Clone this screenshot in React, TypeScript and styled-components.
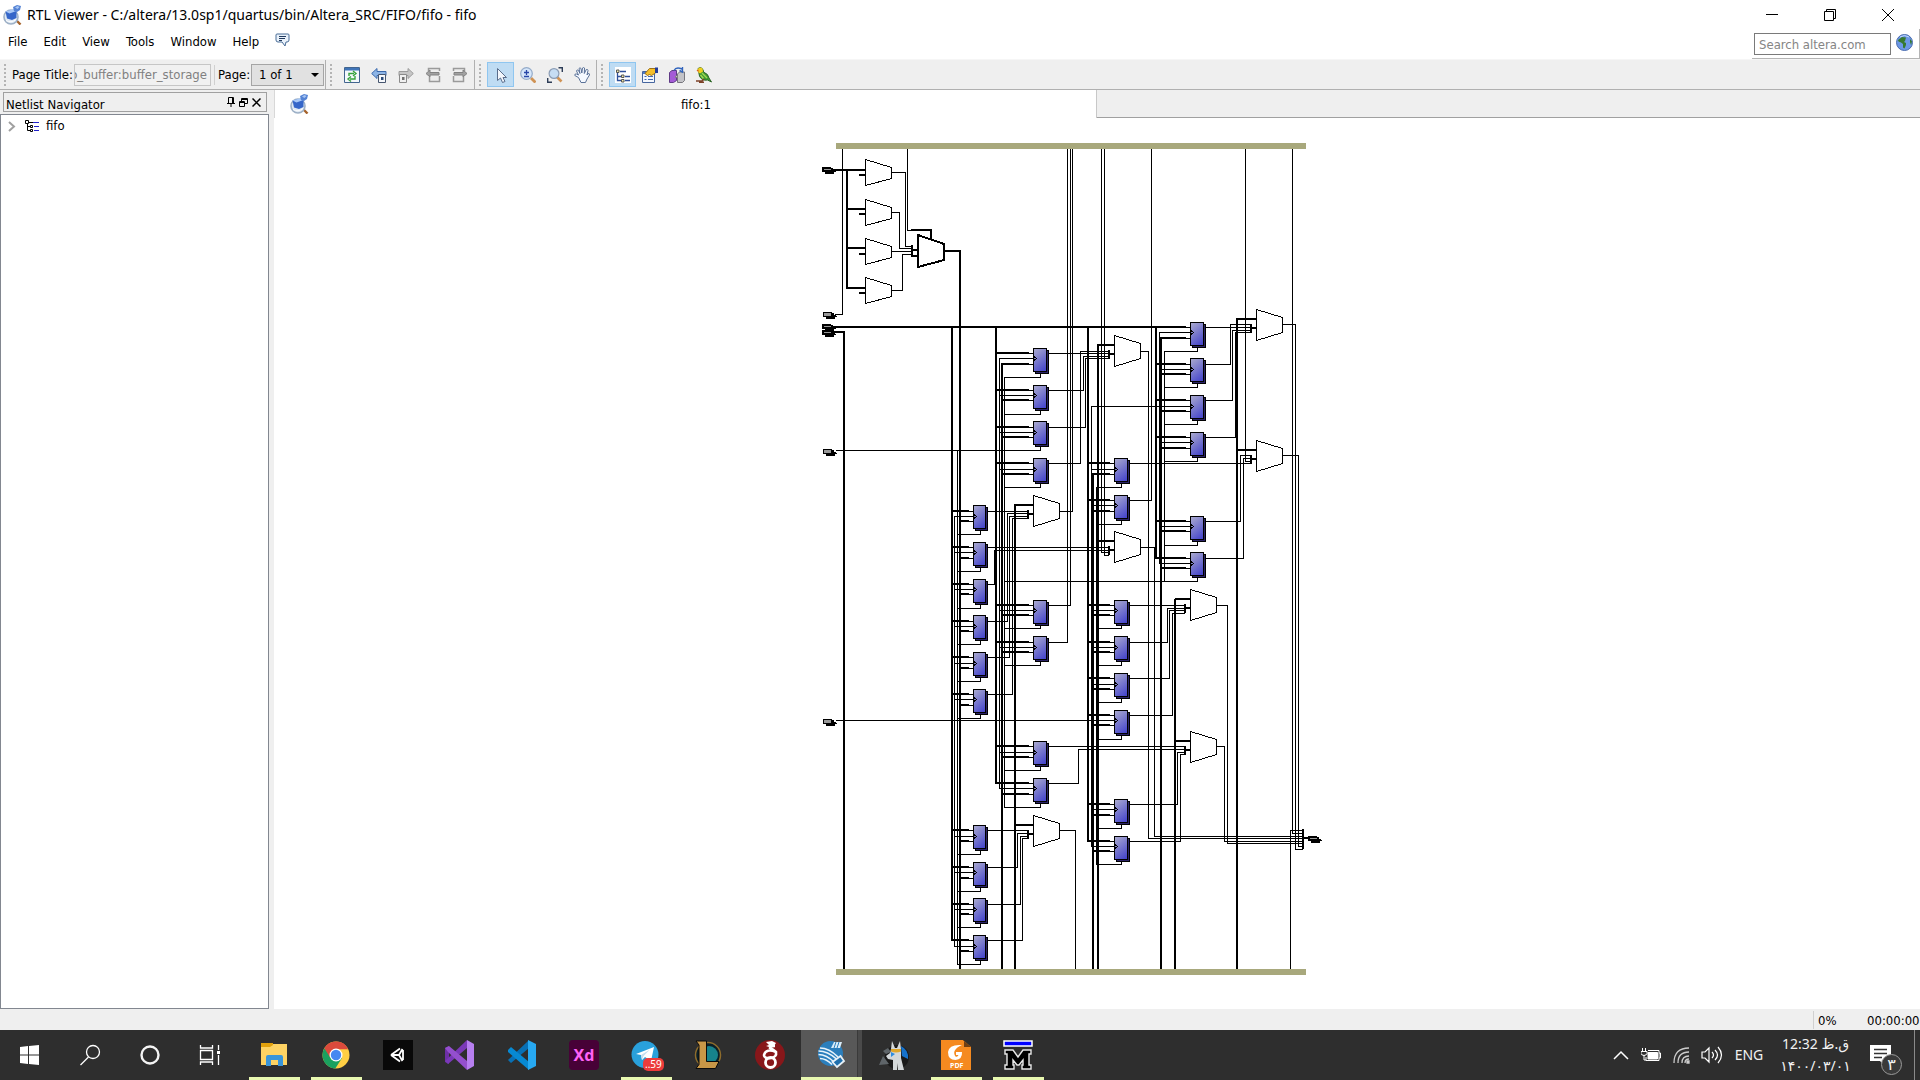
import React from "react";
import styled, { createGlobalStyle, css } from "styled-components";

const Global = createGlobalStyle`
  *, *::before, *::after { box-sizing: border-box; }
  body { margin: 0; background: #fff; }
  button, input, select { font: inherit; color: inherit; margin: 0; }
  button { border: 0; background: none; padding: 0; }
`;

const uiFont = `"DejaVu Sans Condensed", "DejaVu Sans", sans-serif`;
const shellFont = `"Noto Sans", "Open Sans", "DejaVu Sans", sans-serif`;

const Screen = styled.div`
  display: flex;
  flex-direction: column;
  height: 100vh;
  overflow: hidden;
  background: #fff;
  color: #000;
  font: 13px/16px ${uiFont};
`;

/* ---------- title bar and menu ---------- */

const TitleBar = styled.header`
  display: flex;
  align-items: center;
  height: 29px;
  padding: 0 3px 0 2px;
`;
const Title = styled.h1`
  flex: 1;
  margin: 0;
  padding-left: 5px;
  font: 400 14px/20px ${shellFont};
`;
const CaptionButton = styled.button`
  display: grid;
  place-items: center;
  width: 58px;
  height: 28px;
`;
const MenuBar = styled.div`
  display: flex;
  justify-content: space-between;
  height: 30px;
`;
const Menus = styled.nav`
  display: flex;
  align-items: center;
  gap: 16px;
  padding: 0 8px 4px;
`;
const SearchBox = styled.form`
  display: flex;
  align-items: center;
  gap: 5px;
  padding: 1px 6px 0 2px;
  border-right: 1px solid #b5b5b5;
  border-bottom: 1px solid #b5b5b5;
`;
const SearchInput = styled.input`
  width: 137px;
  height: 22px;
  padding: 0 4px;
  border: 1px solid #7a7a7a;
  background: #fff;
  &::placeholder { color: #858585; opacity: 1; }
`;

/* ---------- tool bar ---------- */

const ToolBar = styled.div`
  display: flex;
  height: 31px;
  background: #efefef;
  border-top: 1px solid #f6f6f6;
  border-bottom: 1px solid #b0b0b0;
`;
const ToolGroup = styled.div<{ $width?: number; $open?: boolean }>`
  display: flex;
  align-items: center;
  ${(p) => p.$width && css`width: ${p.$width}px;`}
  padding-left: 4px;
  border-right: ${(p) => (p.$open ? "0" : "1px solid #b0b0b0")};
`;
const Grip = styled.span`
  width: 2px;
  height: 22px;
  margin-right: 6px;
  background: repeating-linear-gradient(#b4b4b4 0 2px, transparent 2px 4px);
`;
const TitleField = styled.input`
  width: 137px;
  height: 22px;
  margin-right: 3px;
  padding: 0 3px 0 0;
  border: 1px solid #c6c6c6;
  background: #f1f1f1;
  color: #808080;
  direction: rtl;
`;
const FieldLabel = styled.label<{ $width: number }>`
  width: ${(p) => p.$width}px;
  white-space: nowrap;
`;
const Rule = styled.span`
  width: 1px;
  height: 20px;
  margin-right: 3px;
  background: #d0d0d0;
`;
const PageSelect = styled.span`
  position: relative;
  svg { position: absolute; right: 5px; top: 8px; pointer-events: none; }
  select {
    appearance: none;
    width: 73px;
    height: 22px;
    padding: 0 7px;
    border: 1px solid #a5a5a5;
    border-radius: 0;
    background: #e1e1e1;
  }
`;
const Tool = styled.button<{ $on?: boolean }>`
  display: grid;
  place-items: center;
  width: 27px;
  height: 25px;
  border: 1px solid ${(p) => (p.$on ? "#8fc6f0" : "transparent")};
  background: ${(p) => (p.$on ? "#bfdcf3" : "transparent")};
`;

/* ---------- work area ---------- */

const Work = styled.div`
  display: flex;
  flex: 1;
  min-height: 0;
  background: #efefef;
`;
const Dock = styled.aside`
  display: flex;
  flex-direction: column;
  width: 269px;
  margin-right: 5px;
`;
const DockHeader = styled.div`
  display: flex;
  align-items: center;
  height: 20px;
  margin: 2px 2px 2px 3px;
  padding: 0 3px 0 2px;
  border: 1px solid #a0a0a0;
`;
const DockTitle = styled.h2`
  flex: 1;
  margin: 0;
  padding-top: 6px;
  font: inherit;
`;
const DockButton = styled.button`
  display: grid;
  place-items: center;
  width: 13px;
  height: 16px;
`;
const Tree = styled.ul`
  flex: 1;
  margin: 0;
  padding: 2px 6px;
  list-style: none;
  border: 1px solid #828790;
  background: #fff;
`;
const TreeRow = styled.li`
  display: flex;
  align-items: center;
  height: 18px;
  gap: 7px;
`;
const View = styled.main`
  display: flex;
  flex: 1;
  flex-direction: column;
  background: #fff;
`;
const Tabs = styled.div`
  display: flex;
  height: 28px;
`;
const Tab = styled.button`
  display: grid;
  grid-template-columns: 20px 1fr 13px;
  align-items: center;
  width: 50%;
  padding: 0 0 0 14px;
  border-right: 1px solid #c8c8c8;
  border-left: 1px solid #d8d8d8;
  background: #fff;
`;
const TabName = styled.span`
  padding-top: 2px;
`;
const TabSpace = styled.div`
  flex: 1;
  background: #efefef;
  border-bottom: 1px solid #a0a0a0;
`;
const Canvas = styled.div`
  display: flex;
  flex: 1;
  justify-content: center;
  align-items: flex-start;
  padding: 25px 50px 0 0;
  overflow: hidden;
`;
const StatusBar = styled.footer`
  display: flex;
  align-items: center;
  justify-content: flex-end;
  height: 21px;
  background: #efefef;
`;
const Status = styled.span<{ $width: number; $ruled?: boolean }>`
  width: ${(p) => p.$width}px;
  padding: 2px 0 0 4px;
  border-left: 1px solid ${(p) => (p.$ruled ? "#d0d0d0" : "transparent")};
`;

/* ---------- schematic ---------- */

type Reg = [top: number, out: number, clock: number, reset: number, foot: number];
interface Column { x: number; w: number; d: number; clk: number; rst: number; foot: number; regs: Reg[] }

const columns: Column[] = [
  { x: 973, w: 13, d: 952, clk: 954, rst: 960, foot: 957, regs: [
    [505, 511, 516, 521, 534], [542, 547, 552, 558, 571], [579, 584, 589, 594, 608],
    [615, 621, 626, 631, 644], [652, 657, 663, 668, 681], [689, 694, 699, 705, 718],
    [825, 830, 836, 841, 854], [862, 867, 872, 878, 891], [898, 904, 909, 914, 927],
    [935, 940, 946, 951, 964] ] },
  { x: 1033, w: 14, d: 996, clk: 999, rst: 1002, foot: 1004, regs: [
    [348, 353, 358, 364, 377], [385, 390, 395, 400, 414], [421, 427, 432, 437, 450],
    [458, 463, 469, 474, 487], [600, 605, 610, 615, 628], [636, 642, 647, 652, 665],
    [741, 746, 752, 757, 770], [778, 783, 788, 794, 807] ] },
  { x: 1114, w: 14, d: 1088, clk: 1091, rst: 1093, foot: 1096, regs: [
    [458, 463, 469, 474, 487], [495, 500, 505, 511, 524], [600, 605, 610, 615, 628],
    [636, 642, 647, 652, 665], [673, 678, 684, 689, 702], [710, 715, 720, 725, 739],
    [799, 804, 809, 815, 828], [836, 841, 846, 851, 864] ] },
  { x: 1190, w: 14, d: 1156, clk: 1159, rst: 1161, foot: 1164, regs: [
    [322, 327, 332, 338, 351], [358, 364, 369, 374, 387], [395, 400, 406, 411, 424],
    [432, 437, 442, 448, 461], [516, 521, 526, 531, 545], [552, 558, 563, 568, 581] ] },
];

/* four input multiplexers: left edge, top, x of the select line */
const muxes: [number, number, number][] = [
  [1114, 335, 1098], [1033, 495, 1015], [1114, 531, 1098], [1256, 309, 1237],
  [1256, 440, 1237], [1190, 589, 1175], [1190, 731, 1175], [1033, 815, 1015],
];

const thinWires = [
  "M835 314H842V149", "M907 149V230H911",
  "M892 172H905V246H911", "M892 212H899V248H911", "M892 251H911", "M892 290H902V254H911",
  "M836 450H1040", "M836 720H1114", "M957 450V964", "M954 516V946",
  "M999 358V788", "M1004 377V807", "M1091 846V406H1190", "M1096 487V864",
  "M1159 332V563", "M1164 351V581", "M1004 581H1197",
  "M1049 353H1108", "M1049 390H1083V356H1108", "M1049 427H1085V358H1108", "M1049 463H1080V351H1108",
  "M1140 351H1148V838H1302",
  "M988 511H1027", "M988 547H1108", "M988 584H994V550H1108",
  "M988 621H1007V513H1027", "M988 657H1009V516H1027", "M988 694H1012V518H1027",
  "M1059 511H1072V149", "M1049 642H1067V149", "M1049 605H1070V149",
  "M1101 149V552H1108", "M1104 149V555H1108", "M1140 547H1154V836H1302",
  "M1130 500H1151V149",
  "M1206 327H1250", "M1206 364H1230V324H1250", "M1206 400H1232V330H1250", "M1206 437H1235V332H1250",
  "M1282 324H1295V849H1302", "M1245 149V461H1250", "M1292 146V833H1302",
  "M1206 521H1240V455H1250", "M1206 558H1243V458H1250", "M1130 463H1250", "M1282 455H1298V846H1302",
  "M1130 605H1184", "M1130 642H1167V608H1184", "M1130 678H1169V610H1184", "M1130 715H1172V613H1184",
  "M1216 605H1227V843H1302",
  "M1049 746H1184", "M1049 783H1078V749H1184", "M1130 804H1177V752H1184", "M1130 841H1180V754H1184",
  "M1216 746H1224V841H1302",
  "M988 830H1027", "M988 867H1017V833H1027", "M988 904H1020V836H1027", "M988 940H1022V838H1027",
  "M1059 830H1075V969", "M1302 830H1290V969",
].join("");

const thickWires = [
  "M834 170H864", "M847 170V288", "M847 209H864", "M847 248H864", "M847 288H864",
  "M860 175H864", "M860 214H864", "M860 254H864", "M860 293H864",
  "M912 230H931V238", "M912 246V256", "M912 250H917", "M912 256H917",
  "M918 235V267L944 260V244L918 235", "M944 251H960V969",
  "M834 327H1185", "M834 332H844V969",
  "M952 327V940", "M996 327V783", "M1088 327V841", "M1156 327V558",
  "M1002 364V969", "M1093 474V969", "M1161 338V969",
  "M1098 345V969", "M1015 505V969", "M1237 319V969", "M1175 600V969",
  "M1303 830V848", "M1303 838H1309",
].join("");

const Pin = ({ x, y, bold }: { x: number; y: number; bold?: boolean }) => (
  <g>
    <path d={`M${x + 3} ${y + 3}h10v1h1v1h-2v2h-9z`} fill="#000" />
    <path d={`M${x} ${y}h9v1h2v3h-2v1h-9z`} fill="#000" />
    <path d={`M${x + (bold ? 2 : 1)} ${y + (bold ? 2 : 1)}h7v${bold ? 1 : 3}h-7z`} fill="#999" />
  </g>
);

const Schematic = () => (
  <svg width="512" height="832" viewBox="816 143 512 832" shapeRendering="crispEdges" role="img" aria-label="Netlist schematic of fifo">
    <defs>
      <linearGradient id="cell" x1="0" y1="0" x2="0.5" y2="1.100">
        <stop offset="0" stopColor="#acacce" />
        <stop offset="1" stopColor="#4848cc" />
      </linearGradient>
    </defs>
    <g fill="none" stroke="#000" strokeLinecap="square">
      <path d={thinWires} transform="translate(.5 .5)" />
      <path d={thickWires} strokeWidth="2" />
    </g>
    {[159, 199, 238, 277].map((y) => (
      <path key={y} d={`M865.5 ${y + 0.5}v26l26-7v-11z`} fill="#fff" stroke="#000" />
    ))}
    {muxes.map(([x, y, sel]) => (
      <g key={`${x}-${y}`} fill="none" stroke="#000">
        <path d={`M${sel} ${y + 10}H${x}M${x - 5} ${y + 15}v9M${x - 5} ${y + 19}h5`} strokeWidth="2" />
        <path d={`M${x + 0.5} ${y + 0.5}v31l26-8v-15z`} fill="#fff" />
      </g>
    ))}
    {columns.map((c) =>
      c.regs.map(([top, out, clk, rst, foot]) => (
        <g key={`${c.x}-${top}`} fill="none" stroke="#000">
          <path d={`M${c.d} ${out}H${c.x - 4}M${c.rst} ${rst}H${c.x - 4}`} strokeWidth="2" />
          <path d={`M${c.x - 6} ${out + 0.5}h6M${c.clk} ${clk + 0.5}H${c.x}M${c.x - 6} ${rst + 0.5}h6M${c.foot} ${foot + 0.5}H${c.x + 7.5}V${top + 25}M${c.x + c.w} ${out + 0.5}h3`} />
          <rect x={c.x + 2.5} y={top + 2.5} width={c.w - 1} height="23" fill="#2a2266" />
          <rect x={c.x + 0.5} y={top + 0.5} width={c.w - 1} height="23" fill="url(#cell)" />
          <path d={`M${c.x + 1} ${clk - 1.5}l2.5 2l-2.5 2`} />
        </g>
      ))
    )}
    <Pin x={822} y={167} bold />
    <Pin x={823} y={312} />
    <Pin x={822} y={330} bold />
    <Pin x={822} y={324} bold />
    <Pin x={823} y={449} />
    <Pin x={823} y={719} />
    <Pin x={1308} y={836} bold />
    <path d="M836 143h470v6h-470zM836 969h470v6h-470z" fill="#a8a87c" />
  </svg>
);

/* ---------- application icons ---------- */

const ViewerIcon = () => (
  <svg width="20" height="20" viewBox="0 0 20 20" aria-hidden="true">
    <path d="M14.500 15.500l4 4" stroke="#a5622b" strokeWidth="2.400" />
    <circle cx="9" cy="12" r="7" fill="#dfe9f4" stroke="#9db0c6" strokeWidth="1.600" />
    <path d="M3.500 6.500l9-2 2 2v6.500l-4.500 2-5-1.500z" fill="#3566c9" />
    <path d="M3.500 6.500l8.500-2.500 2.500 2-7 2.500z" fill="#a8c8f7" />
    <path d="M11 2l4-2 4 1-1 4-3 2-3-1z" fill="#5583d4" />
    <path d="M13 2.500l2.500-1.500 2 1-2 2z" fill="#a7c5f3" />
    <path d="M4 15.500q5 3 10-1" fill="none" stroke="#fff" />
  </svg>
);
const ToolSvg = ({ children }: { children: React.ReactNode }) => (
  <svg width="16" height="16" viewBox="0 0 16 16" aria-hidden="true" fill="none">{children}</svg>
);
const Refresh = () => <ToolSvg><path d="M.5.5h15v15H.5z" fill="#f4f8fc" stroke="#42658f" /><path d="M1 1h14v2.500H1z" fill="#3f74b8" /><path d="M5 9V6.500h5M9 4l3 2.500L9 9M11 9v3H6M7 9.500L4 12l3 2.500" stroke="#36a23c" strokeWidth="1.400" /></ToolSvg>;
const Back = () => <ToolSvg><path d="M.7 6.500L6 1.500v3h9v4H6v3z" fill="#8db5e6" stroke="#3a68ac" /><path d="M7.500 7.500h7v8h-7z" fill="#f6f8fb" stroke="#46566f" /><path d="M10 10h2.500v3H10z" fill="#2c4d7c" /></ToolSvg>;
const Forward = () => <ToolSvg><path d="M15.300 6.500L10 1.500v3H1v4h9v3z" fill="#c6c6c6" stroke="#9b9b9b" /><path d="M1.500 7.500h7v8h-7z" fill="#f0f0f0" stroke="#8a8a8a" /><path d="M4 10h2.500v3H4z" fill="#707070" /></ToolSvg>;
const SheetArrow = ({ right }: { right?: boolean }) => (
  <ToolSvg><g transform={right ? "translate(16 0) scale(-1 1)" : undefined}><path d="M3.500 4V1.500h11V4M4.500 10v4.500h10V9" fill="#ededed" stroke="#9a9a9a" strokeWidth="1.500" /><path d="M1 6.500l4-3.500v2.500h9v2.500H5V10z" fill="#a2a2a2" stroke="#828282" /></g></ToolSvg>
);
const Pointer = () => <ToolSvg><path d="M4.500 1.500v12l3-2.500 2 4.500 2.500-1-2-4h3.500z" fill="#f4f7fc" stroke="#5a6d8b" /></ToolSvg>;
const ZoomTool = () => <ToolSvg><path d="M11 11l4.500 4.500" stroke="#d09355" strokeWidth="2.800" /><circle cx="6.500" cy="6.500" r="5.800" fill="#d5e6fa" stroke="#94abc9" strokeWidth="1.200" /><path d="M4 5.500h5M6.500 3v5M4 9.500h5" stroke="#2746a8" strokeWidth="1.300" /></ToolSvg>;
const FitTool = () => <ToolSvg><path d="M11.500.700h3.800V5M.7 11v4.300H5" stroke="#2d3d57" strokeWidth="1.400" /><path d="M10 10l4.500 4.500" stroke="#d09355" strokeWidth="2.600" /><circle cx="7" cy="6.500" r="4.900" fill="#c6ddf4" stroke="#8b9cb4" strokeWidth="1.200" /></ToolSvg>;
const Hand = () => <ToolSvg><path d="M4.500 10.500L.8 8.500q-.3-2 1.700-1.500l2 1L2.500 4Q3 2 4.500 3.500l1.500 3-1-5q1-1.500 2 0l.8 4.500.7-5q1-1 2 0l-.2 5.500 2-4q1.500-.5 1.700 1L13 8l1.200-1.500q1.500-.3 1.300 1.500L13 12l-1.500 3.500H7z" fill="#f5f9ff" stroke="#5b7298" /></ToolSvg>;
const Hierarchy = () => <ToolSvg><path d="M0 0h16v16H0z" fill="#fff" /><path d="M2.500 6v7.500H6M3 9.500h3M5 4.500h6M10 9.500h5M10 13.500h5" stroke="#2e4f9a" strokeWidth="1.300" /><path d="M1.500 3h2.500v2.500H1.500zM6.500 8h2.500v2.500H6.500zM6.500 12.500h2.500V15H6.500z" fill="#eee8aa" stroke="#555" /></ToolSvg>;
const Properties = () => <ToolSvg><path d="M.5 4.500h12v11H.5z" fill="#f3f7fd" stroke="#46669f" /><path d="M1 5h4v2H1z" fill="#4d7ac7" /><path d="M2.500 9.500h2M6 9.500h5M2.500 12.500h2M6 12.500h5" stroke="#4469ae" /><path d="M3 6.500L7.500 1.500h6v4.500l-4 2.500-2-1-2 1z" fill="#f5bf2a" stroke="#9c7119" /><path d="M13 .5h3V6h-3z" fill="#233d9a" /></ToolSvg>;
const Cubes = () => <ToolSvg><path d="M.5 5.500L3 3.500h4.500v10l-3 2h-4z" fill="#a45bd6" stroke="#5f3a86" /><path d="M8.500 7l2-2h5v8.500l-2 2h-5z" fill="#c3c3c7" stroke="#77777d" /><path d="M6.500 9.500q1.500-1.500 2 0t-2 1z" fill="#ddd" stroke="#777" /><path d="M5 3.500Q7-.5 13 2M13.500 0v5L10.500 3.500" stroke="#3265bd" strokeWidth="1.400" /></ToolSvg>;
const Parrot = () => <ToolSvg><path d="M2 1.500q3-2.500 5 1l.5 2.500q5 2 5.500 6l2.500 4-4-2q-6 1-8-4z" fill="#3f9a35" stroke="#2c6626" /><path d="M1.500 2.500q2-3.500 5-1l.5 3-3 2q-3-1-2.500-4z" fill="#f0cf20" /><path d="M.5 3.500l2-1v2.500z" fill="#d4561f" /><path d="M6 6l5 5M4.500 8l3 3.500" stroke="#a2d851" strokeWidth="1.400" /><path d="M0 14h6l2-2M3 15.300h5" stroke="#7c4228" strokeWidth="1.600" /></ToolSvg>;

const NoteIcon = () => <svg width="15" height="14" viewBox="0 0 15 14" aria-hidden="true"><path d="M2 1h11q1 0 1 1v5q0 2-2 2h-1l-1 4-3-4H3Q1 9 1 7V2q0-1 1-1z" fill="#eaf2fb" stroke="#496c96" /><path d="M4 3.500h7M4 5.500h6M4 7.500h3" stroke="#223b5e" /></svg>;
const Globe = () => <svg width="17" height="17" viewBox="0 0 17 17" aria-hidden="true"><circle cx="8.500" cy="8.500" r="8" fill="#6c98e6" stroke="#4a6cae" /><path d="M2 6l4-3 4 .500-1 3.500-1 1 2 1v2l-1.500 3.500-1.500-1V10l-2-1.500-2.500-1zM14 5l2 2.500-1 3.500-1-3z" fill="#37792f" /><path d="M4 3q4.500-3 9 0" stroke="#c3d8fa" fill="none" /></svg>;

/* ---------- Windows task bar ---------- */

const TaskBar = styled.footer`
  display: flex;
  height: 50px;
  background: #2e2e2e;
  color: #f2f2f2;
  font: 14px/20px ${shellFont};
`;
const Shortcuts = styled.nav`
  display: flex;
  flex: 1;
`;
const Start = styled.button`
  display: grid;
  place-items: center;
  width: 60px;
  height: 50px;
`;
const AppGroup = styled.div`
  display: flex;
  padding-left: 3px;
`;
const AppButton = styled.button<{ $running?: boolean; $active?: boolean }>`
  position: relative;
  display: grid;
  place-items: center;
  width: 62px;
  height: 50px;
  background: ${(p) => (p.$active ? "linear-gradient(90deg, #585858 56px, #3a3a3a 56px 57px, #4a4a4a 57px 61px, transparent 61px)" : "transparent")};
  &::after {
    content: "";
    position: absolute;
    right: ${(p) => (p.$active ? 1 : 5)}px;
    bottom: 0;
    left: ${(p) => (p.$active ? 0 : 6)}px;
    height: 3px;
    background: ${(p) => (p.$running || p.$active ? "#e8f8b0" : "transparent")};
  }
`;
const XdTile = styled.span`
  display: grid;
  place-items: center;
  width: 30px;
  height: 30px;
  border-radius: 4px;
  background: #470137;
  color: #ff61f6;
  font: 700 16px/20px ${shellFont};
`;
const Unread = styled.span`
  position: absolute;
  top: 28px;
  left: 28px;
  padding: 0 2px;
  border-radius: 5px;
  background: #ec3b3b;
  color: #fff;
  font: 10px/13px ${shellFont};
`;
const Tray = styled.div`
  display: flex;
  align-items: center;
`;
const TrayButton = styled.button<{ $width: number }>`
  display: grid;
  place-items: center;
  width: ${(p) => p.$width}px;
  height: 50px;
`;
const Clock = styled.button`
  width: 89px;
  height: 50px;
  font: 14px/22px ${shellFont};
  text-align: center;
  span { display: block; }
`;
const Notice = styled(TrayButton)`
  position: relative;
  padding-right: 14px;
`;
const NoticeCount = styled.span`
  position: absolute;
  top: 24px;
  left: 21px;
  width: 21px;
  height: 21px;
  border: 1px solid #9a9a9a;
  border-radius: 50%;
  background: #3a3a3a;
  font: 16px/18px ${shellFont};
`;
const ShowDesktop = styled.button`
  width: 6px;
  height: 50px;
  border-left: 1px solid #8a8a8a;
`;

const Icon30 = ({ children }: { children: React.ReactNode }) => (
  <svg width="30" height="30" viewBox="0 0 30 30" fill="none" aria-hidden="true">{children}</svg>
);

const starts: [string, React.ReactNode][] = [
  ["Start", <Icon30><path d="M5 7l8-1v8.500H5zM14 6l10-1v9.500H14zM5 15.500h8V24l-8-1zM14 15.500h10V25l-10-1z" fill="#fff" /></Icon30>],
  ["Search", <Icon30><circle cx="18" cy="12" r="6.500" stroke="#fff" strokeWidth="1.300" /><path d="M13.500 17L5.500 25" stroke="#fff" strokeWidth="1.300" /></Icon30>],
  ["Cortana", <Icon30><circle cx="15" cy="15" r="8.500" stroke="#f4f4f4" strokeWidth="2.400" /></Icon30>],
  ["Task View", <Icon30><path d="M5.500 5v3h12V5M5.500 10.500h12v9h-12zM5.500 25v-3h12v3M23.500 5v5M23.500 15v10" stroke="#fff" strokeWidth="1.300" /><path d="M22 11h3v3h-3z" fill="#fff" /></Icon30>],
];

const apps: { name: string; icon: React.ReactNode; running?: boolean; active?: boolean }[] = [
  { name: "File Explorer", running: true, icon: <Icon30><path d="M2 3h12v3H2z" fill="#dd9b08" /><path d="M2 6l12-2h14v21H2z" fill="#fed363" /><path d="M2 3h12v2l-3 2H2z" fill="#e2a10c" /><path d="M7 26v-9q0-2 2-2h13q2 0 2 2v9h-5v-6h-7v6z" fill="#3995d9" /></Icon30> },
  { name: "Google Chrome", running: true, icon: <Icon30><circle cx="15" cy="15" r="13.500" fill="#ffcf44" /><path d="M3.300 8.200a13.500 13.500 0 0 0 11 20.300L21 18l-6-3z" fill="#1aa15f" /><path d="M3.300 8.200a13.500 13.500 0 0 1 23.900 1H15l-6 8z" fill="#db4a3c" /><circle cx="15" cy="15" r="6.500" fill="#fff" /><circle cx="15" cy="15" r="5.200" fill="#4688f1" /></Icon30> },
  { name: "Unity", icon: <Icon30><path d="M0 0h30v30H0z" fill="#090909" /><path d="M8 15l9-6.500M20 10v10M17 21.500L8 15M8 15h8M16 15l3.500-6M16 15l3.500 6" stroke="#fff" strokeWidth="1.800" /></Icon30> },
  { name: "Visual Studio", icon: <Icon30><path d="M0 8l4-2v18l-4-2z" fill="#6d2fa5" /><path d="M3 24l19-16V0L0 21z" fill="#7a38b8" /><path d="M0 8l4-2 18 15v9L3 12z" fill="#944fce" /><path d="M22 0l7 4v22l-7 4z" fill="#b77ff0" /></Icon30> },
  { name: "Visual Studio Code", icon: <Icon30><path d="M1 20L20 2l2-2v8L4 23z" fill="#0870b5" /><path d="M1 10l3-3 18 15v8L1 12z" fill="#0789d3" /><path d="M21 0l8 4v22l-8 4z" fill="#27a9f2" /></Icon30> },
  { name: "Adobe XD", icon: <XdTile>Xd</XdTile> },
  { name: "Telegram", running: true, icon: <><Icon30><circle cx="14" cy="14.500" r="13.500" fill="#29a1dc" /><path d="M5 14L23 7l-3 14-6-4-3 3-1-5z" fill="#fff" /><path d="M10 15l9-5.500L12.500 16l-1.500 4z" fill="#c4dfef" /></Icon30><Unread>..59</Unread></> },
  { name: "League of Legends", icon: <Icon30><circle cx="15" cy="15" r="12.500" fill="#0b2029" stroke="#8e6c2c" strokeWidth="1.500" /><circle cx="16" cy="15" r="9" fill="#17838c" /><path d="M3 1h10.500v20.500H26l-3.500 7H3l3-4V5z" fill="#c89747" stroke="#0b0b0b" /></Icon30> },
  { name: "WireGuard", icon: <Icon30><circle cx="15" cy="15" r="15" fill="#88171a" /><circle cx="15.500" cy="22.500" r="5" stroke="#fff" strokeWidth="2.800" /><path d="M21 12q-10-4-12 3 0 4 7 3 6-1 5-6-3-3-6-4 0-2 5-2" stroke="#fff" strokeWidth="2.600" /><path d="M11 2l6-1 4 2-2 3-5 1-3-1 3-1z" fill="#fff" /></Icon30> },
  { name: "Quartus II", active: true, icon: <Icon30><circle cx="13.500" cy="13.500" r="12.500" fill="#2b7fbd" /><path d="M14 8l3-6h8l-2 6z" fill="#d9edf9" /><path d="M19 2l-2 6M22 2l-2 6" stroke="#2b7fbd" /><path d="M1.500 11q9 0 18 8M1.500 14.500q8 0 16 8M3 18.500q6 0 12 6M3 8q9 0 18 9" stroke="#e9f4fb" strokeWidth="1.600" /><path d="M15.500 22l8-6 3.500 5-7 6z" fill="#1f6fac" stroke="#e8f1f7" strokeWidth="1.800" /></Icon30> },
  { name: "ModelSim PE", icon: <Icon30><circle cx="18" cy="17" r="12" fill="#1a1a1a" /><path d="M22 6q8 4 7 13l-6-3z" fill="#1672cb" /><path d="M11 13l1-4 1-8 3 7h2l3-7 1 8v9l3 12h-6v-7l-1 7h-4v-10l-5-1-2-3z" fill="#d4d8da" /><path d="M12 9h10v2.500q-5 2-10 0z" fill="#e0a62a" /><path d="M12 12l4 2-4 3z" fill="#2c8ce0" /><path d="M4 11l5-3 3 4-5 2zM0 25l4-9 6 8z" fill="#5f6569" /></Icon30> },
  { name: "Foxit PDF", running: true, icon: <Icon30><path d="M0 0h22l8 7v23H0z" fill="#f58a20" /><path d="M22 0h1v7h7z" fill="#713f13" /><path d="M21 5q-13-1-14 7 0 8 7.500 8 7-.500 6.500-8h-6v3h2.500q-1 2.500-3 1.500Q10 10 21 5z" fill="#fff" /><text x="9" y="28" fill="#fff" fontFamily="Open Sans, sans-serif" fontSize="7" fontWeight="700">PDF</text></Icon30> },
  { name: "ModelSim", running: true, icon: <Icon30><path d="M1 1h28v5H1z" fill="#00f" stroke="#fff" strokeWidth="1.500" /><path d="M2 10h8l5 7 5-7h8v4h-2v11h2v4h-9v-4h1v-5l-4 5h-2l-4-5v5h1v4H2v-4h2V14H2z" fill="#000" stroke="#e8e8e8" strokeWidth="1.400" /></Icon30> },
];

const App = () => (
  <Screen>
    <Global />
    <TitleBar>
      <ViewerIcon />
      <Title>RTL Viewer - C:/altera/13.0sp1/quartus/bin/Altera_SRC/FIFO/fifo - fifo</Title>
      <CaptionButton aria-label="Minimize"><svg width="12" height="12"><path d="M0 5.500h12" stroke="#000" /></svg></CaptionButton>
      <CaptionButton aria-label="Restore"><svg width="12" height="12" fill="none" stroke="#000"><path d="M.5 2.500h9v9h-9zM2.500 2.500v-2h9v9h-2" /></svg></CaptionButton>
      <CaptionButton aria-label="Close"><svg width="12" height="12"><path d="M0 0l12 12M12 0L0 12" stroke="#000" /></svg></CaptionButton>
    </TitleBar>
    <MenuBar>
      <Menus aria-label="Main menu">
        {["File", "Edit", "View", "Tools", "Window", "Help"].map((m) => <button key={m}>{m}</button>)}
        <button aria-label="Feedback"><NoteIcon /></button>
      </Menus>
      <SearchBox onSubmit={(e) => e.preventDefault()}>
        <SearchInput aria-label="Search altera.com" placeholder="Search altera.com" />
        <button aria-label="Search the web"><Globe /></button>
      </SearchBox>
    </MenuBar>
    <ToolBar role="toolbar">
      <ToolGroup $width={326}>
        <Grip />
        <FieldLabel $width={62} htmlFor="page-title">Page Title:</FieldLabel>
        <TitleField id="page-title" readOnly value="o_buffer:buffer_storage" />
        <Rule />
        <FieldLabel $width={33} htmlFor="page-no">Page:</FieldLabel>
        <PageSelect>
          <select id="page-no"><option>1 of 1</option></select>
          <svg width="8" height="6"><path d="M0 1h8L4 5z" fill="#000" /></svg>
        </PageSelect>
      </ToolGroup>
      <ToolGroup $width={149}>
        <Grip />
        <Tool aria-label="Refresh"><Refresh /></Tool>
        <Tool aria-label="Back"><Back /></Tool>
        <Tool aria-label="Forward"><Forward /></Tool>
        <Tool aria-label="Previous page"><SheetArrow /></Tool>
        <Tool aria-label="Next page"><SheetArrow right /></Tool>
      </ToolGroup>
      <ToolGroup $width={122}>
        <Grip />
        <Tool $on aria-label="Selection tool"><Pointer /></Tool>
        <Tool aria-label="Zoom tool"><ZoomTool /></Tool>
        <Tool aria-label="Fit in window"><FitTool /></Tool>
        <Tool aria-label="Hand tool"><Hand /></Tool>
      </ToolGroup>
      <ToolGroup $open>
        <Grip />
        <Tool $on aria-label="Netlist Navigator"><Hierarchy /></Tool>
        <Tool aria-label="Properties"><Properties /></Tool>
        <Tool aria-label="Partitions"><Cubes /></Tool>
        <Tool aria-label="Bird's eye view"><Parrot /></Tool>
      </ToolGroup>
    </ToolBar>
    <Work>
      <Dock>
        <DockHeader>
          <DockTitle>Netlist Navigator</DockTitle>
          <DockButton aria-label="Pin"><svg width="8" height="10" fill="none" stroke="#000"><path d="M1.500 6V.500h5V6M0 6.500h8M4 6.500V10M5.500 1v5" /></svg></DockButton>
          <DockButton aria-label="Float"><svg width="9" height="9" fill="none" stroke="#000"><path d="M2.500 3V.500h6v5H6M3 1.500h5M.5 3.500h5v5h-5zM1 4.500h4" /></svg></DockButton>
          <DockButton aria-label="Close panel"><svg width="9" height="9" stroke="#000" strokeWidth="1.500"><path d="M.5.5l8 8M8.500.5l-8 8" /></svg></DockButton>
        </DockHeader>
        <Tree>
          <TreeRow>
            <svg width="11" height="11" fill="none" stroke="#a0a0a0" strokeWidth="2" aria-hidden="true"><path d="M2 1l5 4.500L2 10" /></svg>
            <svg width="14" height="12" fill="none" stroke="#000" aria-hidden="true"><path d="M.5.5h3v3h-3zM2.500 4v6.500H5M3 6.500h2M4 2.500h4M5.500 5.500h2v2h-2zM5.500 9.500h2v2h-2z" /><path d="M8 2.500h6M9 6.500h5M9 10.500h5" stroke="#22c" /></svg>
            fifo
          </TreeRow>
        </Tree>
      </Dock>
      <View>
        <Tabs>
          <Tab><ViewerIcon /><TabName>fifo:1</TabName></Tab>
          <TabSpace />
        </Tabs>
        <Canvas><Schematic /></Canvas>
      </View>
    </Work>
    <StatusBar>
      <Status $width={49} $ruled>0%</Status>
      <Status $width={58}>00:00:00</Status>
    </StatusBar>
    <TaskBar>
      <Shortcuts aria-label="Taskbar">
        {starts.map(([name, icon]) => <Start key={name} aria-label={name}>{icon}</Start>)}
        <AppGroup>
          {apps.map((a) => <AppButton key={a.name} aria-label={a.name} $running={a.running} $active={a.active}>{a.icon}</AppButton>)}
        </AppGroup>
      </Shortcuts>
      <Tray>
        <TrayButton $width={30} aria-label="Show hidden icons"><svg width="16" height="10" fill="none" stroke="#fff" strokeWidth="1.500"><path d="M1 9l7-7 7 7" /></svg></TrayButton>
        <TrayButton $width={30} aria-label="Battery"><svg width="20" height="14" fill="none" stroke="#fff"><path d="M7 2.500h11v10H5V9M18 5h1.500v5H18M1.500 0v3M4.500 0v3M0 3.500h6v2q0 1.500-3 2-3-.5-3-2zM3 7v5h2" /><path d="M7 4.500h9.500v6.500H7z" fill="#fff" /></svg></TrayButton>
        <TrayButton $width={31} aria-label="Wi-Fi"><svg width="17" height="17" fill="none" stroke="#ccc" strokeWidth="1.300"><path d="M1 16Q1 1 16 1M5 16Q5 5 16 5M9 16q0-7 7-7M12 16q0-4 4-4" /><path d="M14 14h2v2h-2z" fill="#fff" /></svg></TrayButton>
        <TrayButton $width={30} aria-label="Volume"><svg width="22" height="18" fill="none" stroke="#fff" strokeWidth="1.200"><path d="M1 6h3l4-4v14l-4-4H1zM11 6q3 3 0 6M14 4q5 5 0 10M17 1q7 8 0 16" /></svg></TrayButton>
        <TrayButton $width={44} aria-label="Input language">ENG</TrayButton>
        <Clock aria-label="Clock"><span>12:32 ق.ظ</span><span>۱۴۰۰/۰۳/۰۱</span></Clock>
        <Notice $width={54} aria-label="Notifications">
          <svg width="21" height="20" fill="none"><path d="M0 0h21v16h-7v4l-4-4H0z" fill="#fff" /><path d="M4 4.500h13M4 8.500h13M4 12.500h8" stroke="#333" strokeWidth="1.500" /></svg>
          <NoticeCount>۳</NoticeCount>
        </Notice>
        <ShowDesktop aria-label="Show desktop" />
      </Tray>
    </TaskBar>
  </Screen>
);

export default App;
